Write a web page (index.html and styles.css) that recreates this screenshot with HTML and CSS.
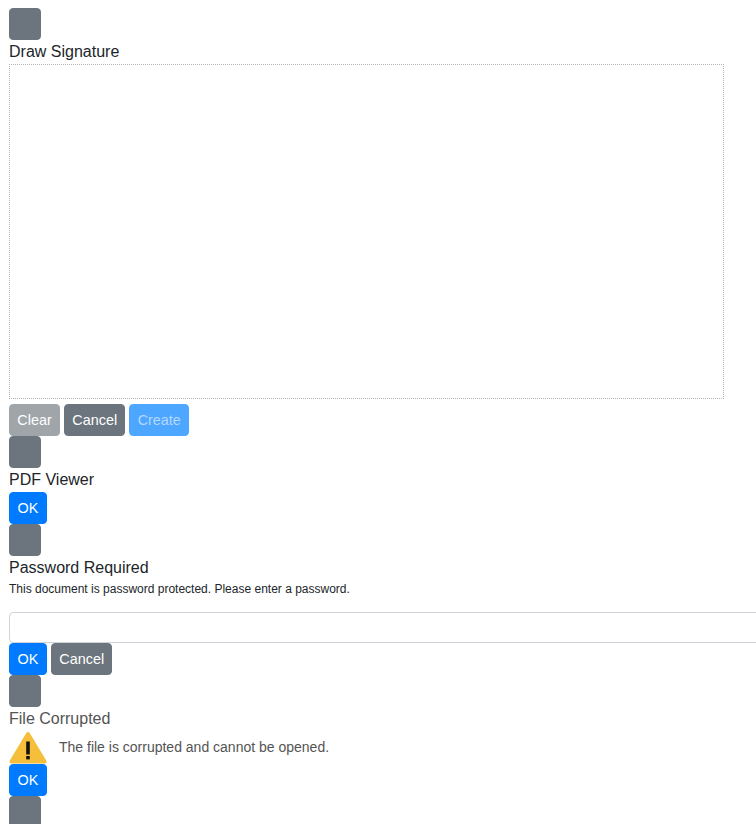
FILE: index.html
```html
<!DOCTYPE html>
<html lang="en">
<head>
<meta charset="utf-8">
<title>PDF Viewer dialogs</title>
<link rel="stylesheet" href="styles.css">
</head>
<body>
<section class="dialog">
  <button class="close" type="button" aria-label="Close"></button>
  <h2 class="title">Draw Signature</h2>
  <div class="canvas"></div>
  <div class="actions">
    <button class="btn clear" type="button">Clear</button>
    <button class="btn grey" type="button">Cancel</button>
    <button class="btn create" type="button">Create</button>
  </div>
</section>
<section class="dialog">
  <button class="close" type="button" aria-label="Close"></button>
  <h2 class="title">PDF Viewer</h2>
  <div class="actions">
    <button class="btn blue" type="button">OK</button>
  </div>
</section>
<section class="dialog">
  <button class="close" type="button" aria-label="Close"></button>
  <h2 class="title">Password Required</h2>
  <p class="hint">This document is password protected. Please enter a password.</p>
  <input class="field" type="password">
  <div class="actions">
    <button class="btn blue" type="button">OK</button>
    <button class="btn grey" type="button">Cancel</button>
  </div>
</section>
<section class="dialog muted">
  <button class="close" type="button" aria-label="Close"></button>
  <h2 class="title">File Corrupted</h2>
  <div class="message">
    <svg class="warn" viewBox="0 0 38 33" aria-hidden="true">
      <path d="M19 3 L35.5 30.5 L2.5 30.5 Z" fill="#f5bf3b" stroke="#f5bf3b" stroke-width="4" stroke-linejoin="round"/>
      <rect x="17.2" y="10.5" width="3.6" height="13" fill="#111"/>
      <rect x="17.2" y="25" width="3.6" height="3.4" fill="#111"/>
    </svg>
    <span class="message-text">The file is corrupted and cannot be opened.</span>
  </div>
  <div class="actions">
    <button class="btn blue" type="button">OK</button>
  </div>
</section>
<section class="dialog">
  <button class="close" type="button" aria-label="Close"></button>
</section>
</body>
</html>
```
FILE: styles.css
```css
html, body {
  margin: 0;
  height: 100%;
  overflow: hidden;
  background: #fff;
}
body {
  padding: 8px 9px;
  box-sizing: border-box;
  font-family: "Liberation Sans", Arial, sans-serif;
  font-size: 16px;
  line-height: 24px;
  color: #212529;
}
.dialog {
  display: flex;
  flex-direction: column;
  align-items: flex-start;
}
.muted {
  color: #545454;
}
.close {
  display: block;
  width: 32px;
  height: 32px;
  padding: 0;
  border: 1px solid #6c757d;
  border-radius: 4px;
  background: #6c757d;
}
.title {
  margin: 0;
  font-size: 16px;
  font-weight: 400;
  line-height: 24px;
}
.canvas {
  box-sizing: border-box;
  width: 715px;
  height: 335px;
  margin-bottom: 5px;
  border: 1px dotted #b4b4b4;
}
.actions {
  display: flex;
  gap: 4px;
}
.btn {
  box-sizing: border-box;
  min-width: 38px;
  height: 32px;
  padding: 4px 7.3px;
  border: 1px solid transparent;
  border-radius: 4px;
  font-family: inherit;
  font-size: 14.4px;
  line-height: 22px;
  color: #fff;
}
.grey {
  background: #6c757d;
  border-color: #6c757d;
}
.blue {
  background: #007bff;
  border-color: #007bff;
}
.clear {
  background: #a0a5aa;
  border-color: #a0a5aa;
}
.create {
  background: #4da6ff;
  border-color: #4da6ff;
  color: #b3d9ff;
}
.hint {
  margin: 0 0 14px;
  font-size: 12px;
  line-height: 18px;
}
.field {
  display: block;
  box-sizing: border-box;
  width: 800px;
  height: 31px;
  padding: 4px 8px;
  border: 1px solid #ced4da;
  border-radius: 4px;
  background: #fff;
}
.message {
  display: flex;
  align-items: flex-start;
  gap: 12px;
  height: 33px;
}
.warn {
  display: block;
  width: 38px;
  height: 33px;
}
.message-text {
  font-size: 14px;
  line-height: 32px;
}
```
